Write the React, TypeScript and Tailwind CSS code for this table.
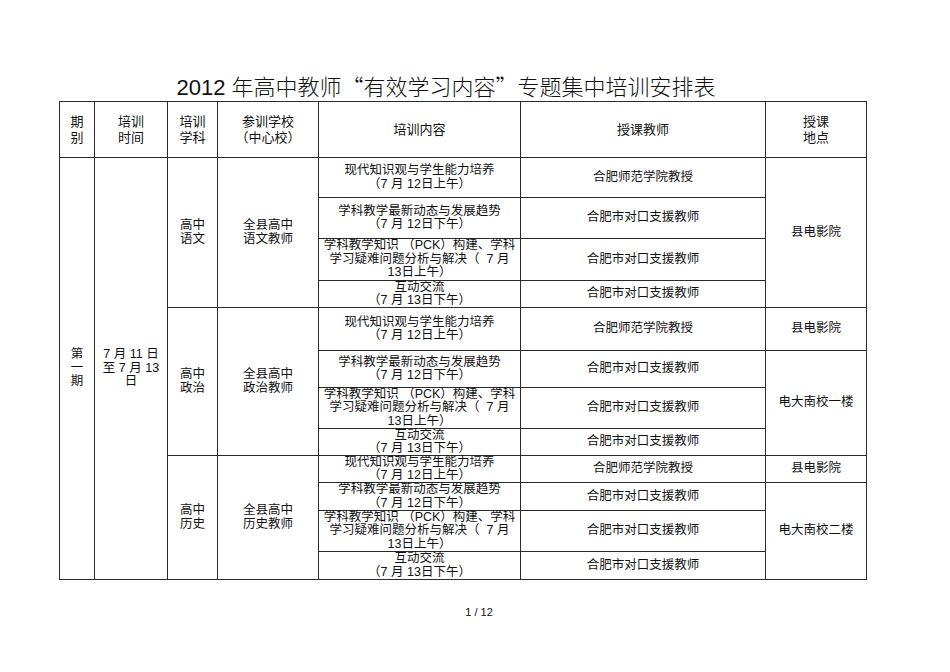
const A = ['现代知识观与学生能力培养', '（7 月 12日上午）']
const B = ['学科教学最新动态与发展趋势', '（7 月 12日下午）']
const C = ['学科教学知识 （PCK）构建、学科', '学习疑难问题分析与解决（  7 月', '13日上午）']
const D = ['互动交流', '（7 月 13日下午）']

const PROF = '合肥师范学院教授'
const HELP = '合肥市对口支援教师'

type Group = {
  subject: string[]
  school: string[]
  heights: number[]
  places: { text: string; span: number }[]
}

const groups: Group[] = [
  {
    subject: ['高中', '语文'],
    school: ['全县高中', '语文教师'],
    heights: [40, 41, 42, 27],
    places: [{ text: '县电影院', span: 4 }],
  },
  {
    subject: ['高中', '政治'],
    school: ['全县高中', '政治教师'],
    heights: [43, 37, 41, 27],
    places: [
      { text: '县电影院', span: 1 },
      { text: '电大南校一楼', span: 3 },
    ],
  },
  {
    subject: ['高中', '历史'],
    school: ['全县高中', '历史教师'],
    heights: [27, 28, 41, 28],
    places: [
      { text: '县电影院', span: 1 },
      { text: '电大南校二楼', span: 3 },
    ],
  },
]

const cell = 'border border-[#2a2a2a] p-0 text-center align-middle'

function Lines({ lines }: { lines: string[] }) {
  return (
    <>
      {lines.map((l, i) => (
        <div key={i} className="whitespace-pre">
          {l}
        </div>
      ))}
    </>
  )
}

function Fixed({ h, children }: { h: number; children: React.ReactNode }) {
  // fixed height box, text may spill over like the pdf export does
  return (
    <div className="flex flex-col items-center justify-center overflow-visible" style={{ height: h }}>
      {children}
    </div>
  )
}

export default function App() {
  const contents = [A, B, C, D]
  const teachers = [PROF, HELP, HELP, HELP]
  const totalRows = groups.reduce((s, g) => s + g.heights.length, 0)
  const cjk = "font-['Noto_Sans_CJK_SC',sans-serif]"

  return (
    <div className="w-[950px] h-[672px] bg-white text-[#111] font-['Liberation_Sans','Noto_Sans_CJK_SC',sans-serif]">
      <div className="ml-[59px] w-[806px] pr-[32px] pt-[72px] text-center text-[22px] leading-[27px] font-light">
        2012 年高中教师<span className={cjk}>“</span>有效学习内容<span className={cjk}>”</span>专题集中培训安排表
      </div>

      <table className="ml-[59px] w-[807px] table-fixed border-collapse text-[12.5px] leading-[13.5px]">
        <colgroup>
          <col className="w-[35px]" />
          <col className="w-[73px]" />
          <col className="w-[50px]" />
          <col className="w-[101px]" />
          <col className="w-[202px]" />
          <col className="w-[245px]" />
          <col className="w-[101px]" />
        </colgroup>
        <thead>
          <tr className="h-[56px] text-[13px] leading-[16px]">
            <th className={`${cell} font-normal`}>
              <Lines lines={['期', '别']} />
            </th>
            <th className={`${cell} font-normal`}>
              <Lines lines={['培训', '时间']} />
            </th>
            <th className={`${cell} font-normal`}>
              <Lines lines={['培训', '学科']} />
            </th>
            <th className={`${cell} font-normal`}>
              <Lines lines={['参训学校', '（中心校）']} />
            </th>
            <th className={`${cell} font-normal`}>培训内容</th>
            <th className={`${cell} font-normal`}>授课教师</th>
            <th className={`${cell} font-normal`}>
              <Lines lines={['授课', '地点']} />
            </th>
          </tr>
        </thead>
        <tbody>
          {groups.map((g, gi) =>
            g.heights.map((h, ri) => {
              let placeStart = 0
              const place = g.places.find((p) => {
                const hit = placeStart === ri
                placeStart += p.span
                return hit
              })
              return (
                <tr key={`${gi}-${ri}`} style={{ height: h }}>
                  {gi === 0 && ri === 0 && (
                    <>
                      <td rowSpan={totalRows} className={cell}>
                        <Lines lines={['第', '一', '期']} />
                      </td>
                      <td rowSpan={totalRows} className={cell}>
                        <Lines lines={['7 月 11 日', '至 7 月 13', '日']} />
                      </td>
                    </>
                  )}
                  {ri === 0 && (
                    <>
                      <td rowSpan={g.heights.length} className={cell}>
                        <Lines lines={g.subject} />
                      </td>
                      <td rowSpan={g.heights.length} className={cell}>
                        <Lines lines={g.school} />
                      </td>
                    </>
                  )}
                  <td className={cell}>
                    <Fixed h={h - 1}>
                      <Lines lines={contents[ri]} />
                    </Fixed>
                  </td>
                  <td className={cell}>
                    <Fixed h={h - 1}>{teachers[ri]}</Fixed>
                  </td>
                  {place && (
                    <td rowSpan={place.span} className={cell}>
                      {place.text}
                    </td>
                  )}
                </tr>
              )
            })
          )}
        </tbody>
      </table>

      <div className="mt-[24px] ml-[8px] text-center text-[11px]">1 / 12</div>
    </div>
  )
}
